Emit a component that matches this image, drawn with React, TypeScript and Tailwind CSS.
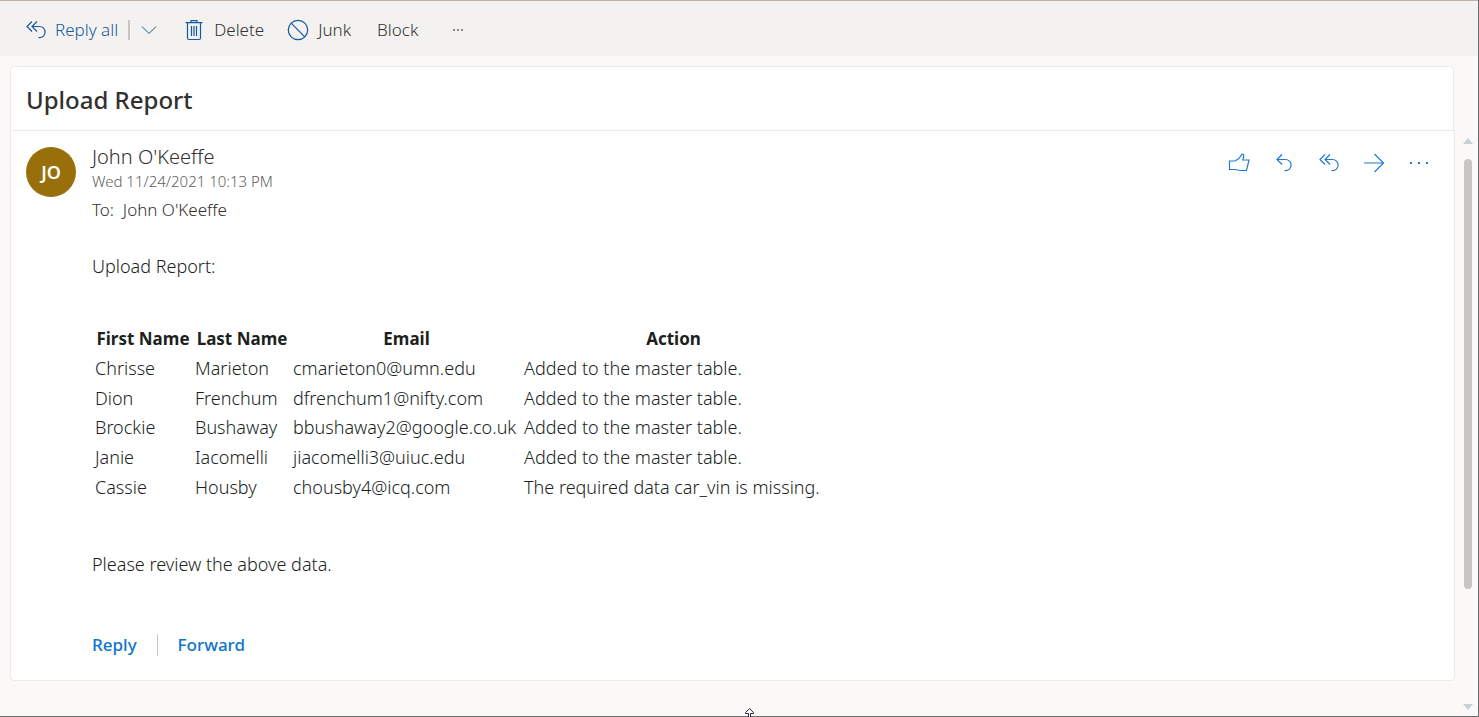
import type { ReactNode } from 'react'

type Row = { first: string; last: string; email: string; action: string }

const rows: Row[] = [
  { first: 'Chrisse', last: 'Marieton', email: 'cmarieton0@umn.edu', action: 'Added to the master table.' },
  { first: 'Dion', last: 'Frenchum', email: 'dfrenchum1@nifty.com', action: 'Added to the master table.' },
  { first: 'Brockie', last: 'Bushaway', email: 'bbushaway2@google.co.uk', action: 'Added to the master table.' },
  { first: 'Janie', last: 'Iacomelli', email: 'jiacomelli3@uiuc.edu', action: 'Added to the master table.' },
  { first: 'Cassie', last: 'Housby', email: 'chousby4@icq.com', action: 'The required data car_vin is missing.' },
]

function Icon({ children, className = '' }: { children: ReactNode; className?: string }) {
  return (
    <svg
      width="22"
      height="22"
      viewBox="0 0 22 22"
      fill="none"
      stroke="currentColor"
      strokeWidth="1.2"
      aria-hidden="true"
      className={`shrink-0 ${className}`}
    >
      {children}
    </svg>
  )
}

function ReplyAllIcon() {
  return (
    <Icon>
      <path d="M7 2.5 2 7.5l5 5M12 2.5l-5 5 5 5M7 7.5h7.5a5.6 5.6 0 0 1 0 11.2h-1" />
    </Icon>
  )
}

function ReplyIcon() {
  return (
    <Icon>
      <path d="M9 2.5 4 7.5l5 5M4 7.5h8.5a5.6 5.6 0 0 1 0 11.2h-1" />
    </Icon>
  )
}

function ForwardIcon() {
  return (
    <Icon>
      <path d="M1 11h19M11.5 2l9 9-9 9" />
    </Icon>
  )
}

function LikeIcon() {
  return (
    <Icon>
      <path d="M1.500 9h5.500c2.600-1.200 5-3.200 6.500-6 1-1.500 2.600-.8 2.300.8L14.800 8h6.200l-2.500 10.500h-6L7 17.500H1.500z" />
    </Icon>
  )
}

function TrashIcon() {
  return (
    <Icon>
      <path d="M2.500 3.700h17M8 3.500V1.600h6v1.900M4.500 3.700v15.300c0 1 .5 1.500 1.500 1.500h10c1 0 1.500-.5 1.500-1.500V3.700M8.500 7v10M11 7v10M13.500 7v10" />
    </Icon>
  )
}

function JunkIcon() {
  return (
    <Icon>
      <circle cx="11" cy="11" r="9.700" />
      <path d="m4.200 4.200 13.600 13.600" />
    </Icon>
  )
}

function MoreIcon() {
  return (
    <Icon>
      <path d="M2 10h2v2H2zM10 10h2v2h-2zM18 10h2v2h-2z" fill="currentColor" stroke="none" />
    </Icon>
  )
}

function Toolbar() {
  return (
    <header className="flex h-14 items-center border-t border-[#c0aea9] bg-[#f3f2f0] pt-0.5 pl-[25px] text-[#323130]">
      <button type="button" className="flex items-center gap-2 text-[#155a9c]">
        <ReplyAllIcon />
        Reply all
      </button>
      <span className="ml-2.5 h-5 w-0.5 bg-[#c8c6c4]" />
      <button type="button" aria-label="More reply options" className="ml-2 text-[#155a9c]">
        <Icon>
          <path d="m4 7.500 7 7 7-7" strokeWidth="1" />
        </Icon>
      </button>
      <button type="button" className="ml-[23px] flex items-center gap-[9px]">
        <span className="text-[#155a9c]"><TrashIcon /></span>
        Delete
      </button>
      <button type="button" className="ml-[23px] flex items-center gap-[9px]">
        <span className="text-[#155a9c]"><JunkIcon /></span>
        Junk
      </button>
      <button type="button" className="ml-[26px]">Block</button>
      <button type="button" aria-label="More commands" className="ml-[34px] text-[#8a8886]">
        <svg width="12" height="4" viewBox="0 0 12 4" fill="currentColor" aria-hidden="true">
          <path d="M1 1h2v2H1zM5 1h2v2H5zM9 1h2v2H9z" />
        </svg>
      </button>
    </header>
  )
}

function MessageActions() {
  return (
    <div className="flex h-8 items-center gap-[23px] text-[#1f7ad4]">
      <button type="button" aria-label="Like"><LikeIcon /></button>
      <button type="button" aria-label="Reply"><ReplyIcon /></button>
      <button type="button" aria-label="Reply all"><ReplyAllIcon /></button>
      <button type="button" aria-label="Forward"><ForwardIcon /></button>
      <button type="button" aria-label="More actions"><MoreIcon /></button>
    </div>
  )
}

function ReportTable() {
  return (
    <table className="h-[179px] border-separate border-spacing-[2px] text-lg leading-6 text-[#201f1e]">
      <thead>
        <tr className="text-center text-[17px] font-bold">
          <th scope="col" className="min-w-[98px] p-px">First Name</th>
          <th scope="col" className="min-w-[96px] p-px">Last Name</th>
          <th scope="col" className="min-w-[229px] p-px">Email</th>
          <th scope="col" className="min-w-[301px] p-px">Action</th>
        </tr>
      </thead>
      <tbody>
        {rows.map((row) => (
          <tr key={row.email}>
            <td className="p-px">{row.first}</td>
            <td className="p-px">{row.last}</td>
            <td className="p-px">{row.email}</td>
            <td className="p-px">{row.action}</td>
          </tr>
        ))}
      </tbody>
    </table>
  )
}

function Scrollbar() {
  return (
    <div className="flex w-[23px] flex-col items-center pt-2 pb-1.5 pl-[3px]" aria-hidden="true">
      <svg width="10" height="6" viewBox="0 0 10 6" className="shrink-0" fill="#c9d1d5">
        <path d="M0 6 5 0l5 6z" />
      </svg>
      <div className="mt-[15px] w-2 grow-[430] rounded-full bg-[#c8c6c4]" />
      <div className="grow-[115]" />
      <svg width="10" height="6" viewBox="0 0 10 6" className="shrink-0" fill="#c9d1d5">
        <path d="M0 0h10L5 6z" />
      </svg>
    </div>
  )
}

export default function App() {
  return (
    <div className="relative flex min-h-screen flex-col border-r border-b border-[#6e6e6e] bg-[#faf9f8] font-['Noto_Sans','Open_Sans',sans-serif] text-[17px] leading-6 font-light">
      <Toolbar />
      <main className="flex grow flex-col pt-2.5 pl-2.5">
        <div className="mr-6 rounded-t border border-b-0 border-[#edebe9] bg-white px-[15px] pt-[17px] pb-[15px]">
          <h1 className="text-2xl leading-[31px] font-medium text-[#323130]">Upload Report</h1>
        </div>
        <div className="flex grow">
          <article className="mb-[35px] flex grow items-start gap-4 rounded-b border border-[#edebe9] bg-white py-4 pr-6 pl-[15px]">
            <div className="flex size-[50px] shrink-0 items-center justify-center rounded-full bg-[#986f0b] text-lg font-semibold text-white">
              JO
            </div>
            <div className="grow">
              <div className="flex items-start justify-between">
                <div>
                  <p className="-mt-0.5 text-xl leading-6 text-[#323130]">John O'Keeffe</p>
                  <p className="text-[15px] leading-6 text-[#605e5c]">Wed 11/24/2021 10:13 PM</p>
                  <p className="mt-[5px] text-[#323130]">To:&nbsp; John O'Keeffe</p>
                </div>
                <MessageActions />
              </div>
              <p className="mt-8 text-lg leading-6 text-[#201f1e]">Upload Report:</p>
              <div className="mt-[46px]">
                <ReportTable />
              </div>
              <p className="mt-[49px] text-lg leading-6 text-[#201f1e]">Please review the above data.</p>
              <div className="mt-[57px] flex items-center gap-5 font-medium text-[#0f74cc]">
                <button type="button">Reply</button>
                <span className="h-[22px] w-px bg-[#c8c6c4]" />
                <button type="button">Forward</button>
              </div>
            </div>
          </article>
          <Scrollbar />
        </div>
      </main>
      <svg
        width="11"
        height="9"
        viewBox="0 0 11 9"
        fill="white"
        stroke="#27233a"
        aria-hidden="true"
        className="absolute -bottom-px left-[744px]"
      >
        <path d="M4.500 9V5.500H1.500V4.500L5.500.7l4 3.800v1H6.500V9" />
      </svg>
    </div>
  )
}
